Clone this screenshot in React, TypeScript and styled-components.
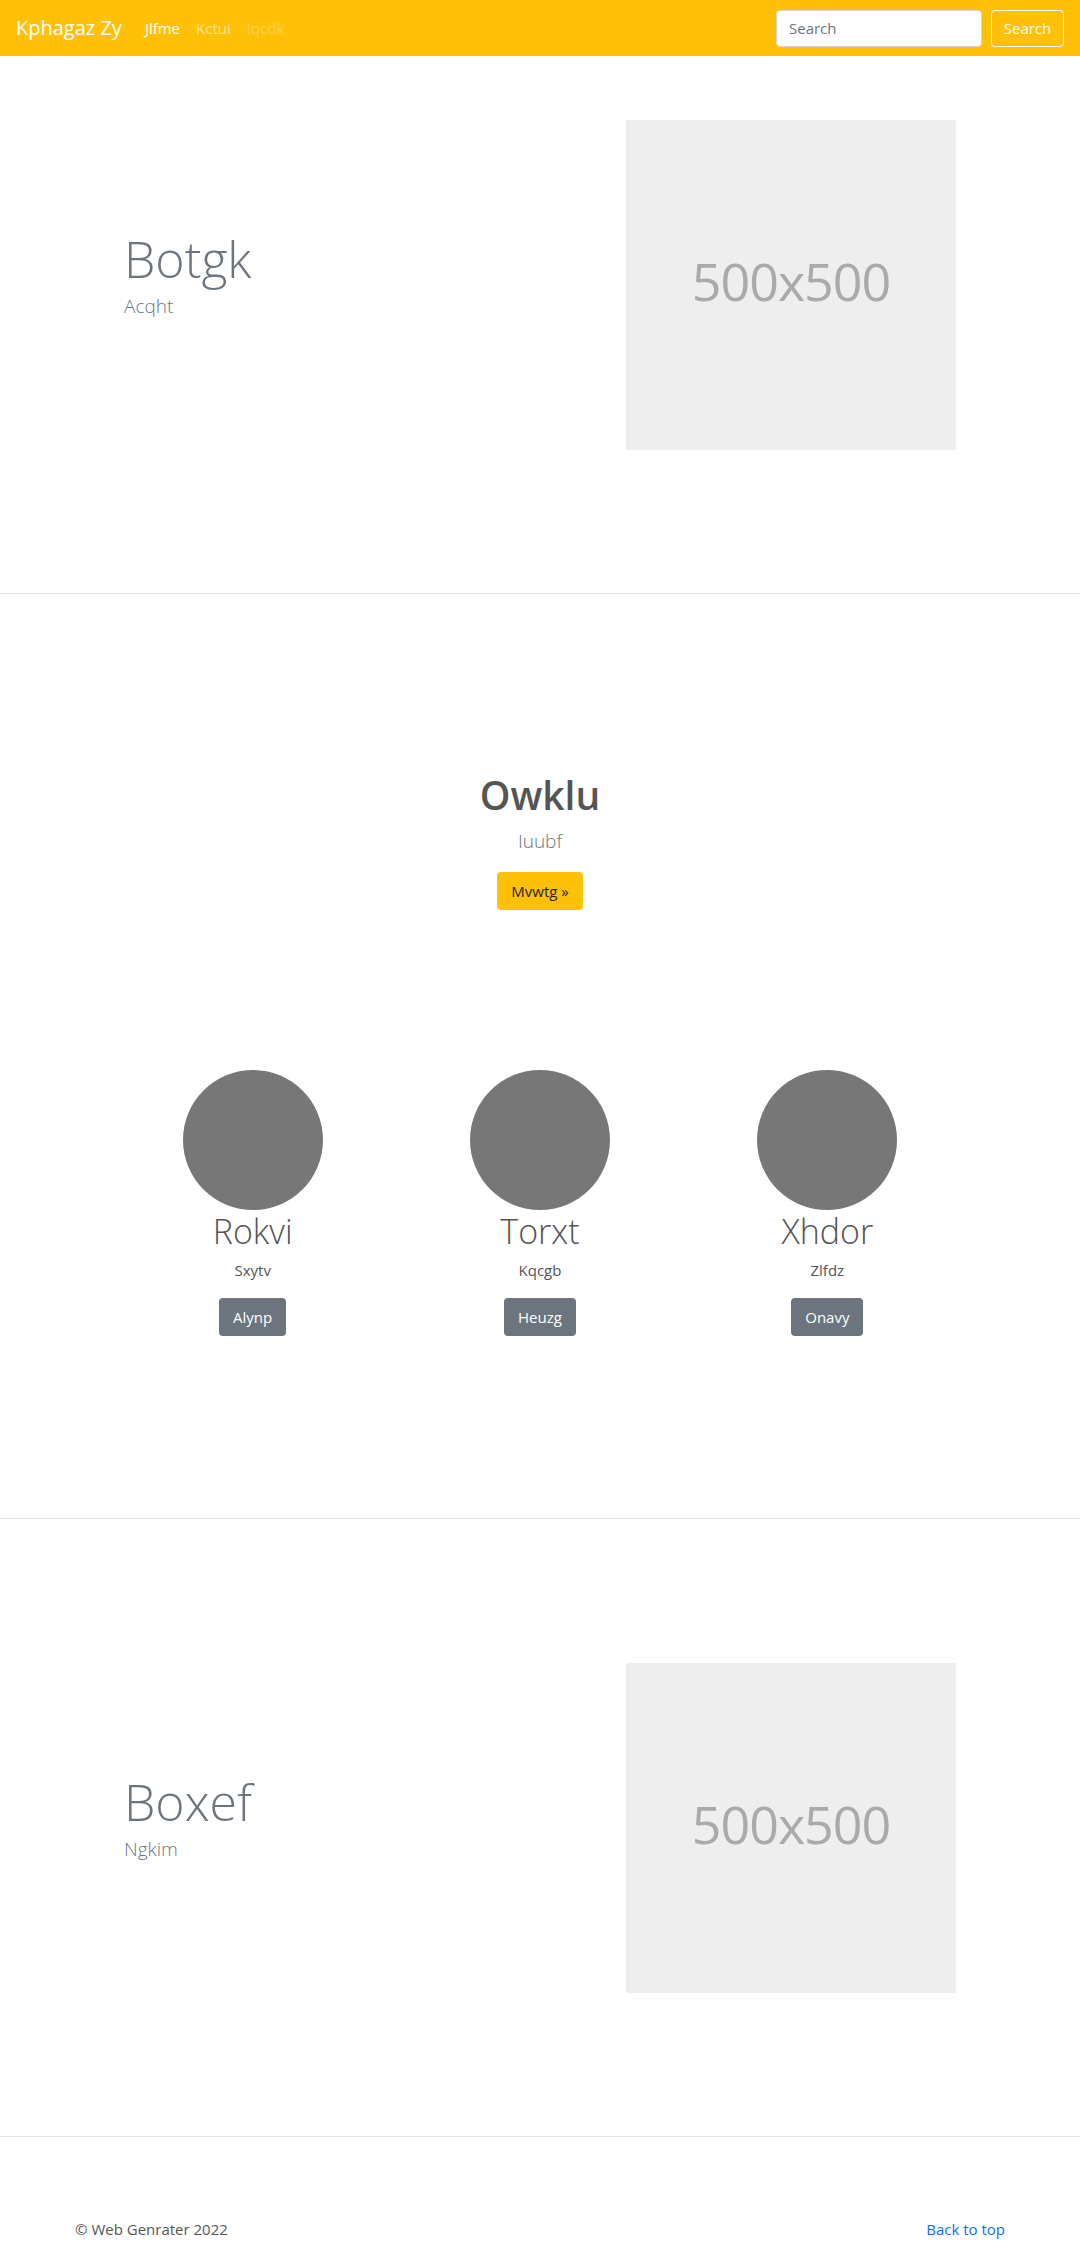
import React from "react";
import styled, { createGlobalStyle } from "styled-components";

const GlobalStyle = createGlobalStyle`
  html, body { margin: 0; padding: 0; background: #fff; }
  body {
    font-family: "Open Sans", "Noto Sans", Arial, sans-serif;
    color: #212529;
    font-size: 16px;
    line-height: 1.5;
  }
  * { box-sizing: border-box; }
`;

const NavBar = styled.nav`
  height: 56px;
  background: #ffc107;
  display: flex;
  align-items: center;
  padding: 0 16px;
`;

const Brand = styled.a`
  color: #fff;
  font-size: 20px;
  line-height: 30px;
  margin-right: 15px;
  text-decoration: none;
`;

const NavLinks = styled.div`
  display: flex;
  flex: 1;
`;

const NavLink = styled.a<{ $state: "active" | "normal" | "disabled" }>`
  padding: 8px 8px;
  font-size: 15px;
  text-decoration: none;
  color: ${(p) =>
    p.$state === "active"
      ? "#fff"
      : p.$state === "normal"
      ? "rgba(255,255,255,0.55)"
      : "rgba(255,255,255,0.25)"};
  font-weight: ${(p) => (p.$state === "active" ? 500 : 400)};
`;

const SearchForm = styled.form`
  display: flex;
  gap: 9px;
`;

const SearchInput = styled.input`
  width: 206px;
  height: 37px;
  border: 1px solid #ced4da;
  border-radius: 4px;
  padding: 6px 12px;
  font-family: inherit;
  font-size: 15px;
  color: #495057;
  &::placeholder { color: #6c757d; }
`;

const OutlineButton = styled.button`
  height: 37px;
  width: 73px;
  background: transparent;
  border: 1px solid #f8f9fa;
  border-radius: 4px;
  color: #f8f9fa;
  font-family: inherit;
  font-size: 15px;
`;

const Feature = styled.section<{ $top: number }>`
  padding: ${(p) => p.$top}px 0 143px;
  border-bottom: 1px solid #e5e5e5;
`;

const FeatureRow = styled.div`
  display: flex;
  align-items: center;
  justify-content: space-between;
  padding: 0 124px 0 124px;
`;

const FeatureText = styled.div``;

const Display = styled.h1`
  margin: 0 0 2px;
  font-size: 50px;
  font-weight: 300;
  line-height: 1.2;
  color: #6c757d;
`;

const Lead = styled.p`
  margin: 0 0 20px;
  font-size: 19px;
  font-weight: 300;
  line-height: 30px;
  color: #6c757d;
`;

const Placeholder = styled.div`
  width: 330px;
  height: 330px;
  background: #eee;
  color: #aaa;
  font-size: 52px;
  display: flex;
  align-items: center;
  justify-content: center;
  padding-bottom: 8px;
  letter-spacing: -1px;
`;

const Marketing = styled.section`
  padding: 177px 0 182px;
  border-bottom: 1px solid #e5e5e5;
  display: flex;
  flex-direction: column;
  align-items: center;
`;

const Heading = styled.h1`
  margin: 0 0 7px;
  font-size: 39px;
  font-weight: 600;
  line-height: 48px;
  color: #555;
`;

const Intro = styled.p`
  margin: 0 0 16px;
  font-size: 19px;
  font-weight: 300;
  line-height: 30px;
  color: #6c757d;
`;

const Btn = styled.button<{ $variant: "warning" | "secondary" }>`
  height: 38px;
  padding: 0 14px;
  border: none;
  border-radius: 4px;
  font-family: inherit;
  font-size: 15px;
  background: ${(p) => (p.$variant === "warning" ? "#ffc107" : "#6c757d")};
  color: ${(p) => (p.$variant === "warning" ? "#212529" : "#fff")};
`;

const People = styled.div`
  width: 862px;
  margin-top: 160px;
  display: grid;
  grid-template-columns: repeat(3, 1fr);
`;

const Person = styled.div`
  display: flex;
  flex-direction: column;
  align-items: center;
`;

const Avatar = styled.div`
  width: 140px;
  height: 140px;
  border-radius: 50%;
  background: #777;
`;

const PersonName = styled.h2`
  margin: 0 0 6px;
  font-size: 34px;
  font-weight: 300;
  line-height: 42px;
  color: #555;
`;

const PersonText = styled.p`
  margin: 0 0 16px;
  font-size: 15px;
  line-height: 24px;
  color: #555;
`;

const Footer = styled.footer`
  padding: 80px 75px 0;
  display: flex;
  justify-content: space-between;
  font-size: 15px;
  line-height: 24px;
  color: #555;
`;

const FooterLink = styled.a`
  color: #0d6efd;
  text-decoration: none;
`;

const people = [
  { name: "Rokvi", text: "Sxytv", btn: "Alynp" },
  { name: "Torxt", text: "Kqcgb", btn: "Heuzg" },
  { name: "Xhdor", text: "Zlfdz", btn: "Onavy" },
];

export default function App() {
  return (
    <>
      <GlobalStyle />
      <NavBar>
        <Brand href="#">Kphagaz Zy</Brand>
        <NavLinks>
          <NavLink $state="active" href="#">Jlfme</NavLink>
          <NavLink $state="normal" href="#">Kctui</NavLink>
          <NavLink $state="disabled" href="#">Iqcdk</NavLink>
        </NavLinks>
        <SearchForm onSubmit={(e) => e.preventDefault()}>
          <SearchInput placeholder="Search" />
          <OutlineButton type="submit">Search</OutlineButton>
        </SearchForm>
      </NavBar>

      <Feature $top={64}>
        <FeatureRow>
          <FeatureText>
            <Display>Botgk</Display>
            <Lead>Acqht</Lead>
          </FeatureText>
          <Placeholder>500x500</Placeholder>
        </FeatureRow>
      </Feature>

      <Marketing>
        <Heading>Owklu</Heading>
        <Intro>Iuubf</Intro>
        <Btn $variant="warning">Mvwtg »</Btn>
        <People>
          {people.map((p) => (
            <Person key={p.name}>
              <Avatar />
              <PersonName>{p.name}</PersonName>
              <PersonText>{p.text}</PersonText>
              <Btn $variant="secondary">{p.btn}</Btn>
            </Person>
          ))}
        </People>
      </Marketing>

      <Feature $top={144}>
        <FeatureRow>
          <FeatureText>
            <Display>Boxef</Display>
            <Lead>Ngkim</Lead>
          </FeatureText>
          <Placeholder>500x500</Placeholder>
        </FeatureRow>
      </Feature>

      <Footer>
        <span>© Web Genrater 2022</span>
        <FooterLink href="#">Back to top</FooterLink>
      </Footer>
    </>
  );
}
